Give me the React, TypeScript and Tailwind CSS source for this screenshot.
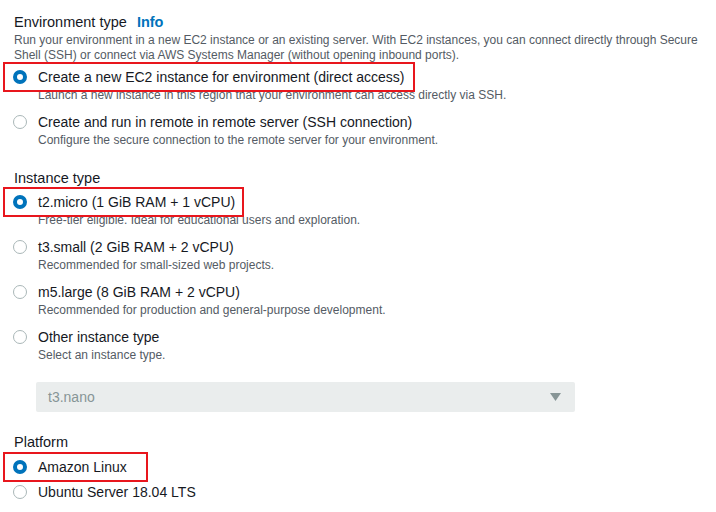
import type { ReactNode } from 'react';

type OptionProps = {
  label: string;
  desc?: string;
  selected?: boolean;
  boxWidth?: number;
};

const Radio = ({ selected }: { selected?: boolean }) =>
  selected ? (
    <span className="block w-[14px] h-[14px] rounded-full border-[4px] border-[#0073bb] bg-white shrink-0" />
  ) : (
    <span className="block w-[14px] h-[14px] rounded-full border-[1.5px] border-[#aab7b8] bg-white shrink-0" />
  );

const Highlight = ({ width }: { width: number }) => (
  <span
    className="absolute left-[-10px] top-[-5px] h-[30px] border-2 border-[#e8161d] pointer-events-none"
    style={{ width }}
  />
);

const Option = ({ label, desc, selected, boxWidth }: OptionProps) => (
  <div>
    <div className="relative flex items-center h-[20px]">
      {boxWidth && <Highlight width={boxWidth} />}
      <Radio selected={selected} />
      <span className="ml-[11px] text-[14px] leading-[20px] text-[#16191f]">{label}</span>
    </div>
    {desc && <p className="pl-[25px] text-[12px] leading-[17px] text-[#545b64]">{desc}</p>}
  </div>
);

const Heading = ({ children }: { children: ReactNode }) => (
  <h2 className="pl-[1px] text-[14.5px] leading-[20px] text-[#16191f]">{children}</h2>
);

export default function App() {
  return (
    <div
      className="w-[716px] h-[512px] bg-white pl-[13px] pt-[12px] overflow-hidden"
      style={{ fontFamily: '"Liberation Sans", Arial, sans-serif' }}
    >
      {/* ENVIRONMENT TYPE */}
      <Heading>
        Environment type <span className="ml-[6px] font-bold text-[#0073bb]">Info</span>
      </Heading>
      <p className="pl-[1px] mt-[1px] text-[12px] leading-[15px] text-[#545b64] whitespace-nowrap">
        Run your environment in a new EC2 instance or an existing server. With EC2 instances, you can connect directly through Secure
        <br />
        Shell (SSH) or connect via AWS Systems Manager (without opening inbound ports).
      </p>

      <div className="mt-[4px] flex flex-col gap-[8px]">
        <Option
          selected
          boxWidth={412}
          label="Create a new EC2 instance for environment (direct access)"
          desc="Launch a new instance in this region that your environment can access directly via SSH."
        />
        <Option
          label="Create and run in remote in remote server (SSH connection)"
          desc="Configure the secure connection to the remote server for your environment."
        />
      </div>

      {/* INSTANCE TYPE */}
      <div className="mt-[19px]">
        <Heading>Instance type</Heading>
      </div>
      <div className="mt-[4px] flex flex-col gap-[8px]">
        <Option
          selected
          boxWidth={241}
          label="t2.micro (1 GiB RAM + 1 vCPU)"
          desc="Free-tier eligible. Ideal for educational users and exploration."
        />
        <Option label="t3.small (2 GiB RAM + 2 vCPU)" desc="Recommended for small-sized web projects." />
        <Option
          label="m5.large (8 GiB RAM + 2 vCPU)"
          desc="Recommended for production and general-purpose development."
        />
        <Option label="Other instance type" desc="Select an instance type." />
      </div>

      <div className="mt-[18px] ml-[23px] w-[539px] h-[30px] rounded-[2px] bg-[#eaeded] flex items-center justify-between pl-[12px] pr-[14px]">
        <span className="text-[14px] text-[#879596]">t3.nano</span>
        <svg width="11" height="8" viewBox="0 0 11 8">
          <path d="M0 0 H11 L5.5 8 Z" fill="#879596" />
        </svg>
      </div>

      {/* PLATFORM */}
      <div className="mt-[20px]">
        <Heading>Platform</Heading>
      </div>
      <div className="mt-[5px] flex flex-col gap-[5px]">
        <Option selected boxWidth={145} label="Amazon Linux" />
        <Option label="Ubuntu Server 18.04 LTS" />
      </div>
    </div>
  );
}
